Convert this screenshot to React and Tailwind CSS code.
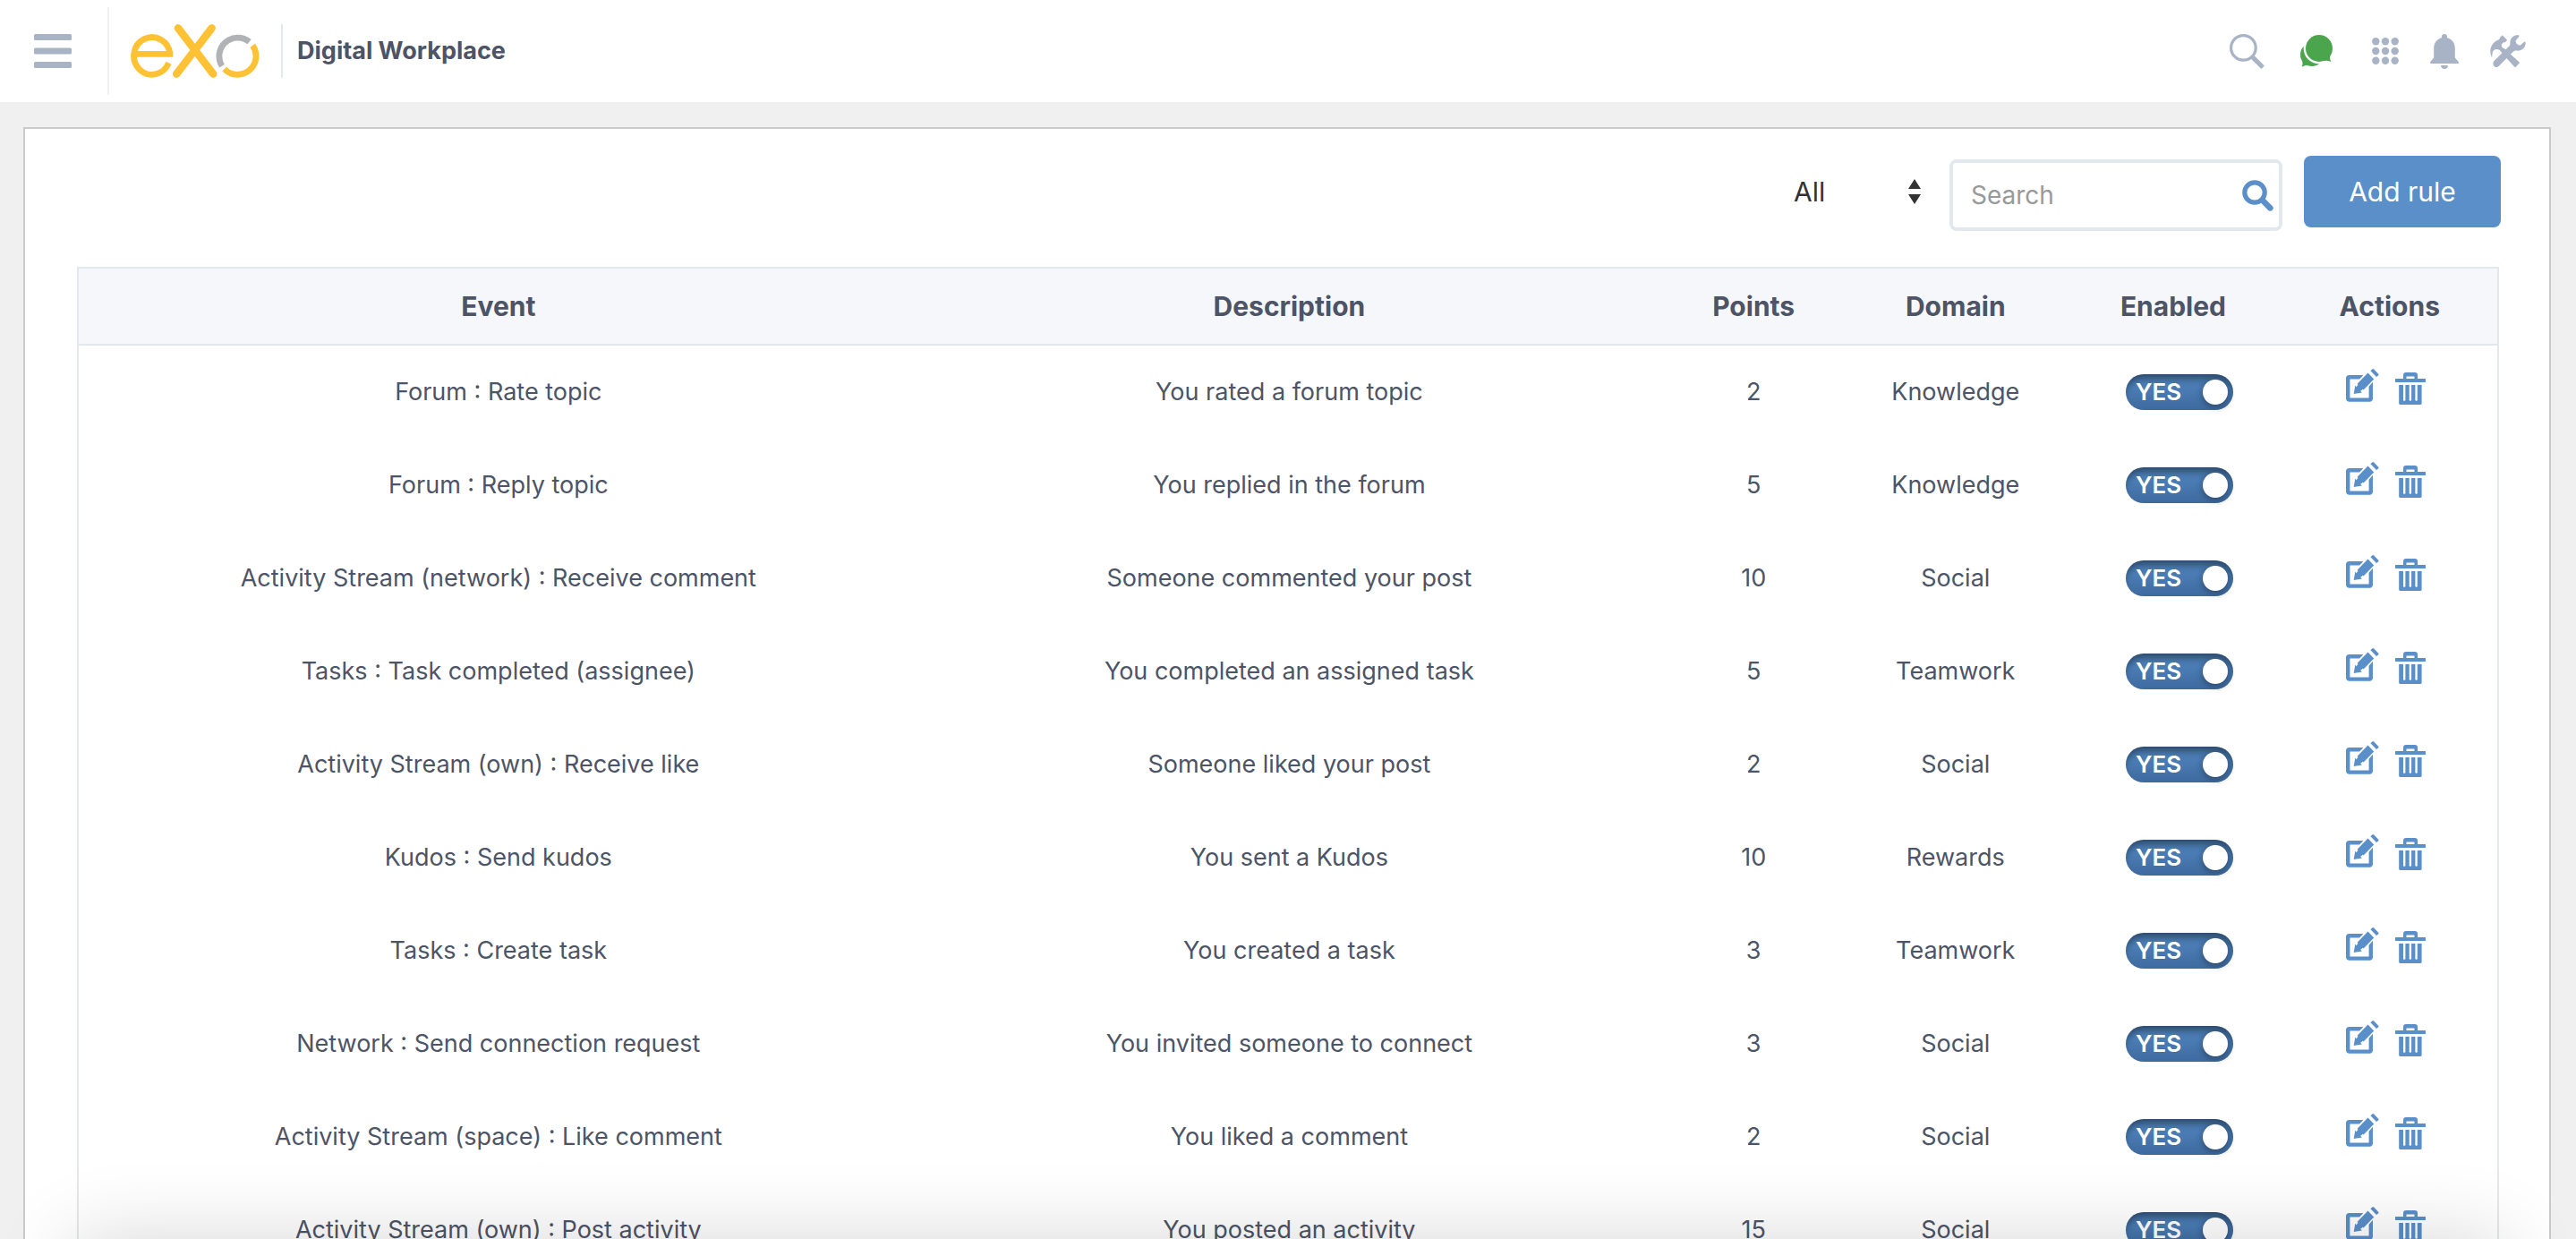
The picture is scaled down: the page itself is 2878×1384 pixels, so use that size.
const RULES = [
  ["Forum : Rate topic", "You rated a forum topic", 2, "Knowledge"],
  ["Forum : Reply topic", "You replied in the forum", 5, "Knowledge"],
  ["Activity Stream (network) : Receive comment", "Someone commented your post", 10, "Social"],
  ["Tasks : Task completed (assignee)", "You completed an assigned task", 5, "Teamwork"],
  ["Activity Stream (own) : Receive like", "Someone liked your post", 2, "Social"],
  ["Kudos : Send kudos", "You sent a Kudos", 10, "Rewards"],
  ["Tasks : Create task", "You created a task", 3, "Teamwork"],
  ["Network : Send connection request", "You invited someone to connect", 3, "Social"],
  ["Activity Stream (space) : Like comment", "You liked a comment", 2, "Social"],
  ["Activity Stream (own) : Post activity", "You posted an activity", 15, "Social"],
];

function Logo() {
  return (
    <svg width="144" height="60" viewBox="0 0 144 60" fill="none" strokeWidth="6.8" aria-label="eXo" role="img">
      <path stroke="#ffc234" d="M3.6 33.4H47.2M43.9 33.4A20.2 20.8 0 1 0 42.2 44" />
      <path stroke="#ffc234" d="M42.6 43.2L41.6 45.2" />
      <path stroke="#ffc234" strokeWidth="8.6" strokeLinecap="round" d="M53 4.4L92.2 55.6M90.6 4.4L51.2 55.6" />
      <path stroke="#b1b2b6" d="M102 46.7A20.7 20.7 0 0 1 132.6 19.7" />
      <path stroke="#ffc234" d="M136.3 23.7A20.7 20.7 0 0 1 104.7 50.2" />
    </svg>
  );
}

function MenuIcon() {
  return (
    <svg width="42" height="38" viewBox="0 0 42 38" fill="#a8b3c5">
      <rect width="42" height="7" rx="1.5" />
      <rect y="15.5" width="42" height="7" rx="1.5" />
      <rect y="31" width="42" height="7" rx="1.5" />
    </svg>
  );
}

function HeaderSearchIcon() {
  return (
    <svg width="39" height="39" viewBox="0 0 39 39" fill="none" stroke="#a8b3c5">
      <circle cx="15.4" cy="15.4" r="13.8" strokeWidth="3.2" />
      <path strokeWidth="5" d="M25.4 25.6L37.2 37.2" />
    </svg>
  );
}

function ChatIcon() {
  return (
    <svg width="36" height="36" viewBox="0 0 36 36" fill="#4aa54d">
      <circle cx="13" cy="22" r="13" />
      <path d="M1.8 35.8C3 32 2.6 30 1.4 27L9 33.6C6 34 4 34.6 1.8 35.8Z" />
      <circle cx="21" cy="15" r="17.4" fill="#fff" />
      <circle cx="21" cy="15" r="15" />
      <path d="M34.3 30C32.8 27 32.8 24.5 33.8 22L25 29C28.5 28.3 31.5 28.6 34.3 30Z" />
    </svg>
  );
}

function GridIcon() {
  const at = [4.3, 15, 25.7];
  return (
    <svg width="30" height="30" viewBox="0 0 30 30" fill="#a8b3c5">
      {at.map((y) => at.map((x) => <circle key={x + "-" + y} cx={x} cy={y} r="4.2" />))}
    </svg>
  );
}

function BellIcon() {
  return (
    <svg width="32" height="39" viewBox="0 0 32 39" fill="#a8b3c5">
      <path d="M16 0C14.2 0 13 1.3 13 3C13 3.8 12.8 4.3 12 4.6C7 6.3 4.2 10.5 4.2 16V26.5L0.5 30.8C-0.2 31.8 0 33 1 33H31C32 33 32.2 31.8 31.5 30.8L27.8 26.5V16C27.8 10.5 25 6.3 20 4.6C19.2 4.3 19 3.8 19 3C19 1.3 17.8 0 16 0Z" />
      <path d="M12 35H20C20 37.4 18.3 39 16 39C13.7 39 12 37.4 12 35Z" />
    </svg>
  );
}

function ToolsIcon() {
  return (
    <svg width="40" height="37" viewBox="0 0 40 37" fill="#a8b3c5">
      <path d="M1.6 24.6C-1.4 17 0.8 8.6 9.8 5.2C10.6 4.9 10.8 4.3 10.8 3.6L13.6 0.2L19.2 5.8L16.4 8.4C15.6 8.2 14.6 8.6 13.4 9.8C12 11.4 12.8 13.8 14.8 14.8C15.4 15 16 15.2 16.6 15.8L33.2 31L28 36.4L13.2 20.2C12.8 19.6 12.6 19 12.2 18.4C10.8 16.4 8.4 15.4 5.8 16.2C2.8 17.2 2.4 20 2.4 24.2Z" />
      <path d="M31.4 0C26.2 0.2 22.4 3.6 22.4 8.2C22.4 10 22.6 11.2 21.6 12.2L4.8 28.8C1.6 32 4.2 36 6.8 36C8.4 36 9.4 35.4 10.4 34.2L26.4 18.2C27.4 17.2 28.6 17.4 30.2 17.6C35.6 18 40 13.6 39.6 8.2L38.4 7.4L34 11.4C31.8 12.2 28.4 9.4 28.6 6.4L32.6 1.4Z" />
    </svg>
  );
}

function SearchIcon() {
  return (
    <svg width="35" height="35" viewBox="0 0 35 35" fill="none" stroke="#5a8fc9">
      <circle cx="14" cy="14" r="11.2" strokeWidth="5.2" />
      <path strokeWidth="6.6" strokeLinecap="round" d="M23.5 23.5L31.3 31.3" />
    </svg>
  );
}

function EditIcon() {
  return (
    <svg width="37" height="37" viewBox="0 0 37 37" fill="#5a8fc9">
      <rect x="2.2" y="9.2" width="25.6" height="25.4" rx="1.5" fill="none" stroke="#5a8fc9" strokeWidth="4.4" />
      <path stroke="#fff" strokeWidth="3" d="M8.7 28L11 18.2L24.3 4L31.3 11.2L18 25.6Z" />
      <path d="M8.7 28L10.3 18.8L17.9 26.6Z" />
      <path d="M12.6 16.8L24.5 4.6L31.3 11.4L19.6 23.6Z" />
      <path d="M27.4 2.2L29.2 0.6C29.9 0 30.6 0 31.3 0.6L36 5.4C36.7 6.1 36.7 6.8 36 7.5L34 9Z" />
    </svg>
  );
}

function TrashIcon() {
  return (
    <svg width="34" height="36" viewBox="0 0 34 36" fill="#5a8fc9">
      <path fillRule="evenodd" d="M9 7V3C9 1 10 0 12 0H22C24 0 25 1 25 3V7H33C34 7 34 7.5 34 8V10C34 11 33.5 11 33 11H1C0.5 11 0 11 0 10V8C0 7.5 0 7 1 7ZM12.5 7H21.5V4.6H12.5Z" />
      <path fillRule="evenodd" d="M4.2 14H29.6V34.6C29.6 35.6 29 36 28.2 36H5.6C4.8 36 4.2 35.6 4.2 34.6ZM9 14V31C9 32 11.4 32 11.4 31V14ZM15.7 14V31C15.7 32 18.1 32 18.1 31V14ZM22.4 14V31C22.4 32 24.8 32 24.8 31V14Z" />
    </svg>
  );
}

function Toggle({ label }) {
  return (
    <label className="flex h-10 w-[120px] cursor-pointer items-center justify-between rounded-full bg-linear-to-b from-[#4a7cb4] from-40% to-[#3e6a9e] pr-[6px] pl-[11px] shadow-[inset_0_8px_8px_-4px_rgba(0,0,0,0.45)]">
      <input type="checkbox" defaultChecked aria-label={label} className="sr-only" />
      <span className="text-[26px] leading-8 font-semibold text-white">YES</span>
      <span className="size-7 rounded-full bg-white shadow-[0_2px_8px_rgba(0,0,0,0.4)]" />
    </label>
  );
}

export default function App() {
  return (
    <div className="h-screen overflow-hidden bg-[#f0f0f0] font-['Inter',sans-serif] text-[#4d5466]">
      <header className="flex h-[114px] items-center bg-white pr-[56px] pl-[38px]">
        <button type="button" aria-label="Open menu"><MenuIcon /></button>
        <div className="ml-10 h-[98px] w-[2px] bg-[#f0f0f0]" />
        <a href="#home" aria-label="Home" className="ml-6"><Logo /></a>
        <div className="ml-6 h-[60px] w-[2px] bg-[#e1e8ee]" />
        <a href="#home" className="ml-4 text-[27px] leading-8 font-bold">Digital Workplace</a>
        <nav className="ml-auto flex items-center">
          <button type="button" aria-label="Search" className="mr-10"><HeaderSearchIcon /></button>
          <button type="button" aria-label="Chat" className="mr-11"><ChatIcon /></button>
          <button type="button" aria-label="Applications" className="mr-[35px]"><GridIcon /></button>
          <button type="button" aria-label="Notifications" className="mr-[35px]"><BellIcon /></button>
          <button type="button" aria-label="Administration"><ToolsIcon /></button>
        </nav>
      </header>

      <main className="mt-7 mr-7 ml-[26px] border-2 border-[#cacaca] bg-white pt-[30px] pr-[54px] pb-14 pl-[58px]">
        <div className="mb-10 flex items-start justify-end">
          <div className="relative mr-7 flex h-20 items-center">
            <select aria-label="Filter rules" className="h-16 w-[150px] appearance-none bg-transparent pl-1 text-[30px] leading-10 text-[#333]">
              <option>All</option>
              <option>Enabled</option>
              <option>Disabled</option>
            </select>
            <svg className="pointer-events-none absolute right-1" width="14" height="28" viewBox="0 0 14 28" fill="#333">
              <path d="M7 0L14 11H0ZM7 28L0 17H14Z" />
            </svg>
          </div>
          <div className="relative mt-1 mr-6 flex items-center">
            <input type="search" aria-label="Search" placeholder="Search" className="h-20 w-[372px] rounded-lg border-4 border-[#e1e8ee] bg-white pr-14 pl-5 text-[28px] leading-10 outline-none placeholder:text-[#999]" />
            <button type="button" aria-label="Run search" className="absolute right-[10px]"><SearchIcon /></button>
          </div>
          <button type="button" className="h-20 w-[220px] rounded-lg bg-[#5a8fc9] text-[30px] leading-10 text-white">Add rule</button>
        </div>

        <div className="pr-[2px]">
          <table className="w-full table-fixed border-separate border-spacing-0 border-2 border-[#e1e8ee] text-center text-[27px] leading-10">
            <colgroup>
              <col />
              <col className="w-[30.7%]" />
              <col className="w-[7.7%]" />
              <col className="w-[9%]" />
              <col className="w-[9%]" />
              <col className="w-[8.9%]" />
            </colgroup>
            <thead>
              <tr className="bg-[#f5f7fb] text-[30px]">
                {["Event", "Description", "Points", "Domain", "Enabled", "Actions"].map((h) => (
                  <th key={h} scope="col" className="h-[86px] border-b-2 border-[#e1e8ee] font-bold">{h}</th>
                ))}
              </tr>
            </thead>
            <tbody>
              {RULES.map(([event, description, points, domain]) => (
                <tr key={event}>
                  <td className="h-[104px]">{event}</td>
                  <td>{description}</td>
                  <td>{points}</td>
                  <td>{domain}</td>
                  <td>
                    <div className="flex justify-center pl-[14px]"><Toggle label={"Enable " + event} /></div>
                  </td>
                  <td>
                    <div className="flex items-start justify-center gap-[18px] pr-2 pb-3">
                      <button type="button" aria-label={"Edit " + event}><EditIcon /></button>
                      <button type="button" aria-label={"Delete " + event} className="mt-1"><TrashIcon /></button>
                    </div>
                  </td>
                </tr>
              ))}
            </tbody>
          </table>
        </div>
      </main>
      <div className="pointer-events-none fixed inset-x-20 top-full h-40 shadow-[0_0_90px_rgba(0,0,0,0.16)]" />
    </div>
  );
}
